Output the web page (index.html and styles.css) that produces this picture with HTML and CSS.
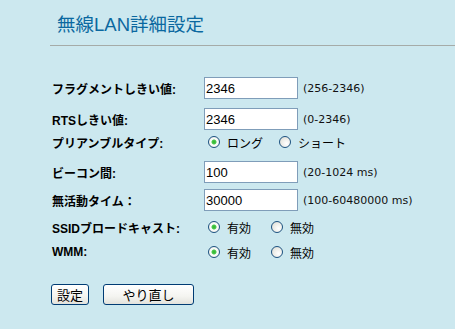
FILE: index.html
```html
<!DOCTYPE html>
<html lang="ja">
<head>
  <meta charset="UTF-8">
  <meta name="viewport" content="width=device-width, initial-scale=1.0">
  <title>無線LAN詳細設定</title>
  <link rel="stylesheet" href="styles.css">
</head>
<body>
  <div class="header">
    <h1>無線LAN詳細設定</h1>
  </div>
  <form class="settings" onsubmit="return false">
    <div class="row r1">
      <label class="name">フラグメントしきい値:</label>
      <input type="text" class="field" value="2346">
      <span class="hint">(256-2346)</span>
    </div>
    <div class="row r2">
      <label class="name">RTSしきい値:</label>
      <input type="text" class="field" value="2346">
      <span class="hint">(0-2346)</span>
    </div>
    <div class="row choice r3">
      <label class="name">プリアンブルタイプ:</label>
      <div class="options">
        <label class="opt"><input type="radio" name="preamble" checked>ロング</label>
        <label class="opt"><input type="radio" name="preamble">ショート</label>
      </div>
    </div>
    <div class="row r4">
      <label class="name">ビーコン間:</label>
      <input type="text" class="field" value="100">
      <span class="hint">(20-1024 ms)</span>
    </div>
    <div class="row r5">
      <label class="name">無活動タイム：</label>
      <input type="text" class="field" value="30000">
      <span class="hint">(100-60480000 ms)</span>
    </div>
    <div class="row choice r6">
      <label class="name">SSIDブロードキャスト:</label>
      <div class="options wide">
        <label class="opt"><input type="radio" name="ssid" checked>有効</label>
        <label class="opt"><input type="radio" name="ssid">無効</label>
      </div>
    </div>
    <div class="row choice r7">
      <label class="name">WMM:</label>
      <div class="options wide">
        <label class="opt"><input type="radio" name="wmm" checked>有効</label>
        <label class="opt"><input type="radio" name="wmm">無効</label>
      </div>
    </div>
    <div class="buttons">
      <button type="submit" class="btn btn-set">設定</button>
      <button type="reset" class="btn btn-reset">やり直し</button>
    </div>
  </form>
</body>
</html>
```

FILE: styles.css
```css
body {
  margin: 0;
  background-color: #cce8ef;
  font-family: "Liberation Sans", "Noto Sans CJK JP", sans-serif;
  color: #000;
}
.header {
  padding-left: 50px;
}
h1 {
  margin: 0;
  padding: 13px 0 8px 7px;
  font-size: 18.5px;
  line-height: 24px;
  font-weight: normal;
  color: #0b68a0;
  border-bottom: 1px solid #a5aba8;
}
.settings {
  padding-left: 52px;
  margin-top: 31px;
}
.row {
  display: flex;
  align-items: center;
  height: 22px;
}
.row.choice {
  height: 16px;
}
.r2 { margin-top: 9px; }
.r3 { margin-top: 4px; }
.r4 { margin-top: 11px; }
.r5 { margin-top: 6px; }
.r6 { margin-top: 8px; }
.r7 { margin-top: 9px; }
.name {
  width: 152px;
  flex-shrink: 0;
  font-size: 12px;
  font-weight: bold;
}
.field {
  box-sizing: border-box;
  width: 94px;
  height: 22px;
  margin: 0;
  padding: 0 1px;
  border: 1px solid #7f9db9;
  background: #fff;
  font-family: "Liberation Sans", sans-serif;
  font-size: 13px;
}
.hint {
  margin-left: 5px;
  font-family: "DejaVu Sans", sans-serif;
  font-size: 11px;
  color: #111;
}
.options {
  display: flex;
  gap: 16px;
  padding-left: 4px;
}
.options.wide {
  gap: 20px;
}
.opt {
  display: flex;
  align-items: center;
  gap: 7px;
  font-size: 12px;
}
.opt input {
  appearance: none;
  width: 12px;
  height: 12px;
  margin: 0;
  border: 1px solid #1c5180;
  border-radius: 50%;
  background: radial-gradient(circle at 65% 65%, #fff 0, #eaeae4 60%, #d4d4cc 100%);
  box-sizing: border-box;
}
.opt input:checked {
  background: radial-gradient(circle, #2fb32f 0, #4cc94c 2px, #fff 3px, #f2f2ec 70%, #d8d8d0 100%);
}
.buttons {
  display: flex;
  gap: 14px;
  margin-top: 24px;
  margin-left: -1px;
}
.btn {
  height: 21px;
  padding: 0;
  border: 1px solid #003c74;
  border-radius: 3px;
  background: linear-gradient(#ffffff, #f4f4f0 60%, #e2e2dc);
  font-family: "Noto Sans CJK JP", sans-serif;
  font-size: 13px;
  line-height: 17px;
  color: #000;
  cursor: pointer;
}
.btn-set {
  width: 38px;
}
.btn-reset {
  width: 91px;
}
```
